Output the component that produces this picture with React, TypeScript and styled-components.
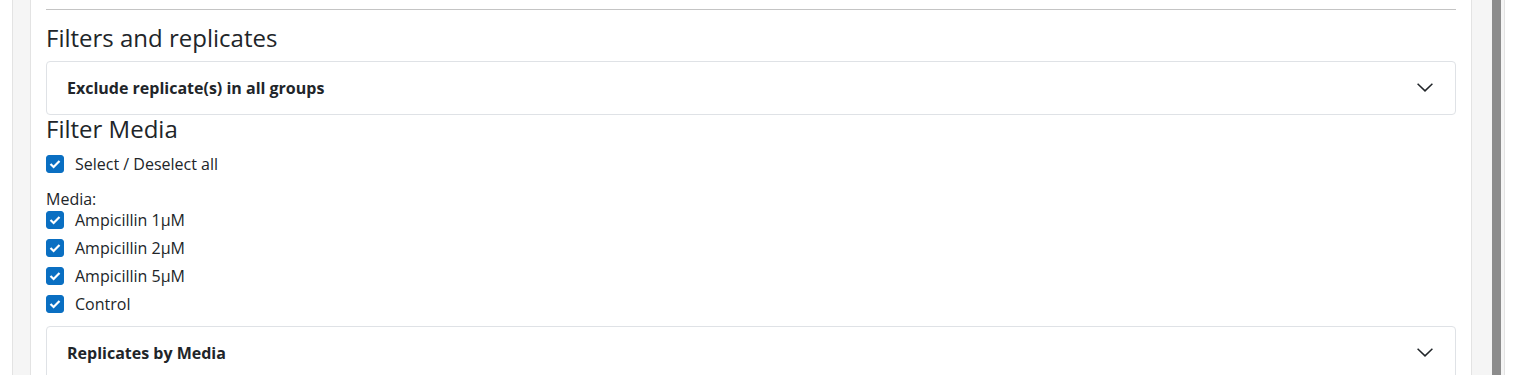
import React, { useState } from "react";
import styled, { createGlobalStyle } from "styled-components";

const GlobalStyle = createGlobalStyle`
  html, body {
    margin: 0;
    padding: 0;
    background: #ffffff;
    font-family: "Open Sans", "Noto Sans", sans-serif;
    color: #212529;
    overflow: hidden;
  }
`;

const Page = styled.div`
  display: flex;
  height: 375px;
  padding-left: 12px;
  width: 1504px;
  box-sizing: border-box;
`;

const Frame = styled.div`
  flex: 1;
  display: flex;
  background: #f5f5f5;
  border-left: 1px solid #e3e3e3;
  border-right: 1px solid #e3e3e3;
  padding-left: 17px;
`;

const Panel = styled.div`
  width: 1442px;
  background: #ffffff;
  border-left: 1px solid #e3e3e3;
  border-right: 1px solid #e3e3e3;
  padding: 0 15px;
  box-sizing: border-box;
  overflow: hidden;
`;

const ScrollTrack = styled.div`
  width: 32px;
  display: flex;
  justify-content: flex-end;
  padding-right: 3px;
  box-sizing: border-box;
`;

const ScrollThumb = styled.div`
  width: 9px;
  background: #8c8c8c;
`;

const Rule = styled.hr`
  margin: 9px 0 0;
  border: 0;
  border-top: 1px solid #c4c4c4;
`;

const SectionTitle = styled.h2`
  margin: 0;
  font-size: 24px;
  font-weight: 400;
  line-height: 1.2;
  color: #212529;
`;

const FirstTitle = styled(SectionTitle)`
  margin-top: 14px;
`;

const Accordion = styled.div`
  border: 1px solid #dfe2e6;
  border-radius: 4px;
  margin-top: 8px;
`;

const AccordionHeader = styled.button`
  width: 100%;
  height: 52px;
  display: flex;
  align-items: center;
  justify-content: space-between;
  padding: 0 22px 0 20px;
  border: 0;
  background: transparent;
  font-family: inherit;
  font-size: 16px;
  font-weight: 700;
  color: #212529;
  cursor: pointer;
`;

const Chevron = () => (
  <svg width="16" height="9" viewBox="0 0 16 9" fill="none">
    <path d="M0.6 0.8 L8 7.9 L15.4 0.8" stroke="#212529" strokeWidth="1.5" />
  </svg>
);

const CheckList = styled.div`
  display: flex;
  flex-direction: column;
`;

const CheckRow = styled.label`
  display: flex;
  align-items: center;
  gap: 11px;
  height: 28px;
  font-size: 16px;
  cursor: pointer;
`;

const Box = styled.span<{ $on: boolean }>`
  width: 18px;
  height: 18px;
  border-radius: 3px;
  box-sizing: border-box;
  border: 1px solid ${(p) => (p.$on ? "#0a6fc2" : "#8a8a8a")};
  background: ${(p) => (p.$on ? "#0a6fc2" : "#ffffff")};
  display: flex;
  align-items: center;
  justify-content: center;
`;

const AllRow = styled(CheckRow)`
  margin-top: 6px;
`;

const GroupLabel = styled.div`
  font-size: 16px;
  line-height: 14px;
  margin-top: 14px;
`;

const LastAccordion = styled(Accordion)`
  margin-top: 8px;
`;

function Check({ on, label, onToggle, as }: { on: boolean; label: string; onToggle: () => void; as?: any }) {
  const Row = as || CheckRow;
  return (
    <Row onClick={onToggle}>
      <Box $on={on}>
        {on && (
          <svg width="12" height="10" viewBox="0 0 12 10" fill="none">
            <path d="M1.5 5 L4.6 8 L10.5 2" stroke="#fff" strokeWidth="2.2" />
          </svg>
        )}
      </Box>
      {label}
    </Row>
  );
}

const media = ["Ampicillin 1µM", "Ampicillin 2µM", "Ampicillin 5µM", "Control"];

export default function App() {
  const [checked, setChecked] = useState<boolean[]>(media.map(() => true));
  const all = checked.every(Boolean);

  return (
    <>
      <GlobalStyle />
      <Page>
        <Frame>
          <Panel>
            <Rule />
            <FirstTitle>Filters and replicates</FirstTitle>
            <Accordion>
              <AccordionHeader>
                Exclude replicate(s) in all groups
                <Chevron />
              </AccordionHeader>
            </Accordion>
            <SectionTitle>Filter Media</SectionTitle>
            <Check
              as={AllRow}
              on={all}
              label="Select / Deselect all"
              onToggle={() => setChecked(media.map(() => !all))}
            />
            <GroupLabel>Media:</GroupLabel>
            <CheckList>
              {media.map((m, i) => (
                <Check
                  key={m}
                  on={checked[i]}
                  label={m}
                  onToggle={() => setChecked(checked.map((c, j) => (j === i ? !c : c)))}
                />
              ))}
            </CheckList>
            <LastAccordion>
              <AccordionHeader>
                Replicates by Media
                <Chevron />
              </AccordionHeader>
            </LastAccordion>
          </Panel>
          <ScrollTrack>
            <ScrollThumb />
          </ScrollTrack>
        </Frame>
      </Page>
    </>
  );
}
